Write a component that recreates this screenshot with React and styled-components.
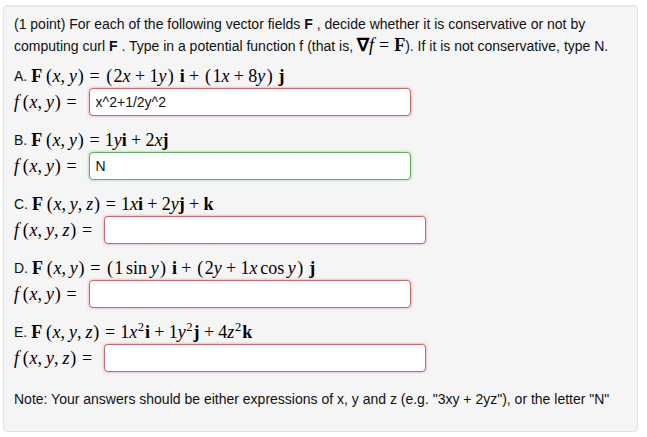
import React from "react";
import styled, { createGlobalStyle } from "styled-components";

const GlobalStyle = createGlobalStyle`
    html, body {
        margin: 0;
        padding: 0;
        background: #ffffff;
    }
    body {
        font-family: "Liberation Sans", Arial, sans-serif;
        font-size: 14px;
        color: #111;
    }
`;

const Panel = styled.div`
    margin: 5px 9px 0 3px;
    height: 427px;
    box-sizing: border-box;
    padding: 8px 10px 0 10px;
    background: #f5f5f5;
    border: 1px solid #e3e3e3;
    border-radius: 4px;
    box-shadow: inset 0 1px 1px rgba(0, 0, 0, 0.05);
`;

const Intro = styled.p`
    margin: 0 0 7px 0;
    line-height: 21px;
`;

const Problem = styled.div`
    display: flex;
    flex-direction: column;
    margin-bottom: 12px;
`;

const Title = styled.div`
    height: 24px;
    display: flex;
    align-items: center;
`;

const AnswerRow = styled.div`
    height: 28px;
    display: flex;
    align-items: center;
    gap: 7px;
`;

const Note = styled.p`
    margin: 17px 0 0 0;
    line-height: 21px;
`;

const Math = styled.span`
    font-family: "Liberation Serif", "Times New Roman", serif;
    font-size: 18px;
    line-height: 20px;
    white-space: nowrap;
    color: #000;
`;

const V = styled.i`
    font-style: italic;
`;

const B = styled.b`
    font-weight: bold;
    font-style: normal;
`;

const Rel = styled.span`
    margin: 0 0.28em;
`;

const Bin = styled.span`
    margin: 0 0.24em;
`;

const Fn = styled.span`
    margin: 0 0.2em 0 0.15em;
`;

const Paren = styled.span`
    margin: 0 ${(p) => (p.$tight ? "0.04em" : "0.08em")};
`;

const Comma = styled.span`
    margin-right: 0.22em;
`;

const Gap = styled.span`
    margin-left: 0.17em;
`;

const Sup = styled.sup`
    font-size: 0.7em;
    line-height: 0;
    vertical-align: 0.55em;
    margin: 0 0.08em 0 0.04em;
`;

const Nabla = styled.span`
    font-weight: bold;
`;

const AnswerInput = styled.input`
    width: 322px;
    height: 28px;
    box-sizing: border-box;
    padding: 4px 6px;
    font-family: "Liberation Sans", Arial, sans-serif;
    font-size: 14px;
    color: #111;
    background: #fff;
    border: 1px solid ${(p) => (p.$ok ? "#5fae5f" : "#cc6666")};
    border-radius: 4px;
    box-shadow: 0 0 3px ${(p) => (p.$ok ? "rgba(80,170,80,0.6)" : "rgba(205,90,90,0.6)")};
    outline: none;
`;

const args = (names) => (
    <>
        <Gap />
        <Paren $tight>(</Paren>
        {names.map((n, i) => (
            <React.Fragment key={n}>
                <V>{n}</V>
                {i < names.length - 1 && <Comma>,</Comma>}
            </React.Fragment>
        ))}
        <Paren $tight>)</Paren>
    </>
);

const problems = [
    {
        label: "A.",
        vars: ["x", "y"],
        field: (
            <>
                <Paren>(</Paren>2<V>x</V>
                <Bin>+</Bin>1<V>y</V>
                <Paren>)</Paren> <B>i</B>
                <Bin>+</Bin>
                <Paren>(</Paren>1<V>x</V>
                <Bin>+</Bin>8<V>y</V>
                <Paren>)</Paren> <B>j</B>
            </>
        ),
        value: "x^2+1/2y^2",
    },
    {
        label: "B.",
        vars: ["x", "y"],
        field: (
            <>
                1<V>y</V>
                <B>i</B>
                <Bin>+</Bin>2<V>x</V>
                <B>j</B>
            </>
        ),
        value: "N",
        ok: true,
    },
    {
        label: "C.",
        vars: ["x", "y", "z"],
        field: (
            <>
                1<V>x</V>
                <B>i</B>
                <Bin>+</Bin>2<V>y</V>
                <B>j</B>
                <Bin>+</Bin>
                <B>k</B>
            </>
        ),
        value: "",
    },
    {
        label: "D.",
        vars: ["x", "y"],
        field: (
            <>
                <Paren>(</Paren>1<Fn>sin</Fn>
                <V>y</V>
                <Paren>)</Paren> <B>i</B>
                <Bin>+</Bin>
                <Paren>(</Paren>2<V>y</V>
                <Bin>+</Bin>1<V>x</V>
                <Fn>cos</Fn>
                <V>y</V>
                <Paren>)</Paren> <B>j</B>
            </>
        ),
        value: "",
    },
    {
        label: "E.",
        vars: ["x", "y", "z"],
        field: (
            <>
                1<V>x</V>
                <Sup>2</Sup>
                <B>i</B>
                <Bin>+</Bin>1<V>y</V>
                <Sup>2</Sup>
                <B>j</B>
                <Bin>+</Bin>4<V>z</V>
                <Sup>2</Sup>
                <B>k</B>
            </>
        ),
        value: "",
    },
];

function App() {
    return (
        <>
            <GlobalStyle />
            <Panel>
                <Intro>
                    (1 point) For each of the following vector fields <b>F</b> , decide
                    whether it is conservative or not by computing curl <b>F</b> . Type in
                    a potential function f (that is,{" "}
                    <Math>
                        <Nabla>∇</Nabla>
                        <V>f</V>
                        <Rel>=</Rel>
                        <B>F</B>
                    </Math>
                    ). If it is not conservative, type N.
                </Intro>
                {problems.map((p) => (
                    <Problem key={p.label}>
                        <Title>
                            <span>{p.label}&nbsp;</span>
                            <Math>
                                <B>F</B>
                                {args(p.vars)}
                                <Rel>=</Rel>
                                {p.field}
                            </Math>
                        </Title>
                        <AnswerRow>
                            <Math>
                                <V>f</V>
                                {args(p.vars)}
                                <Rel>=</Rel>
                            </Math>
                            <AnswerInput
                                type="text"
                                defaultValue={p.value}
                                $ok={p.ok}
                            />
                        </AnswerRow>
                    </Problem>
                ))}
                <Note>
                    Note: Your answers should be either expressions of x, y and z (e.g.
                    "3xy + 2yz"), or the letter "N"
                </Note>
            </Panel>
        </>
    );
}

export default App;
